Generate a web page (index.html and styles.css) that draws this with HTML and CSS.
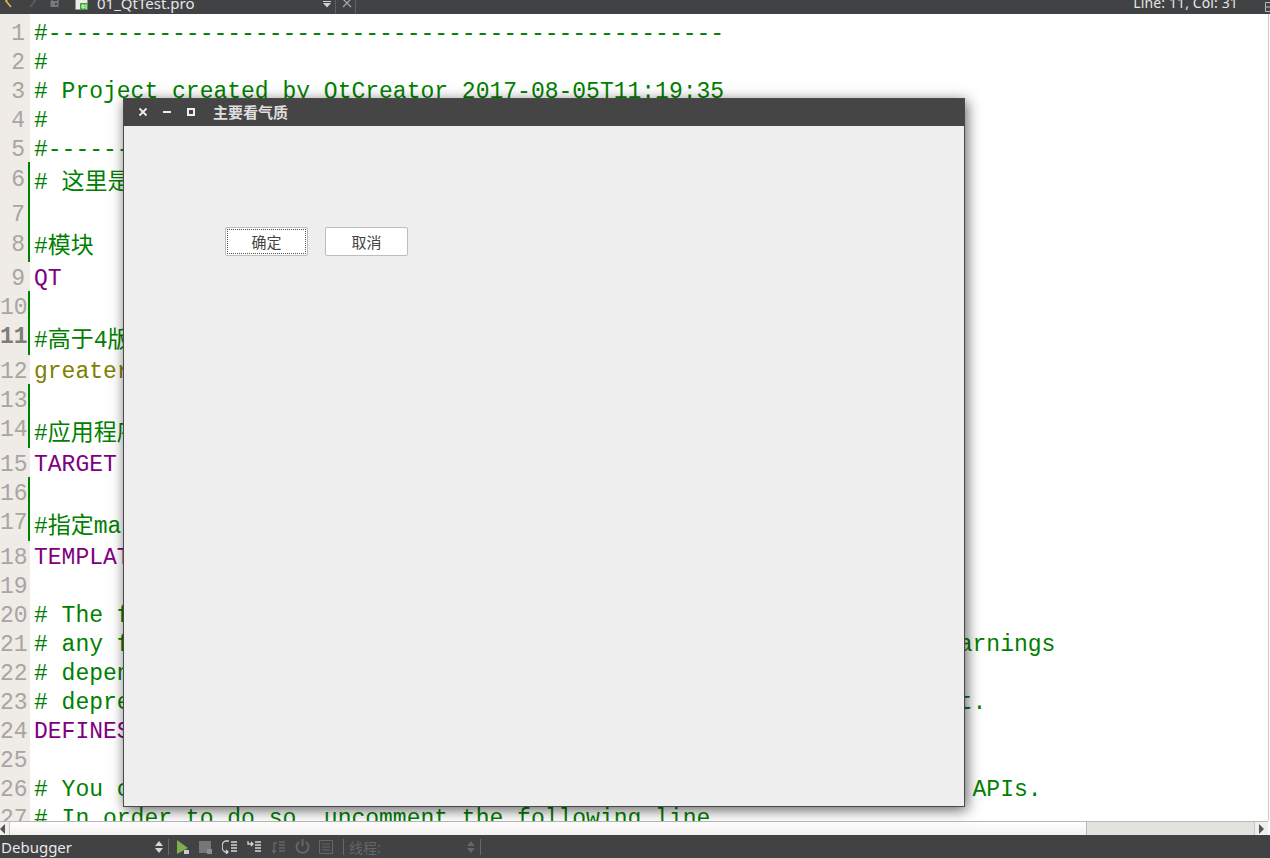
FILE: index.html
```html
<!DOCTYPE html>
<html lang="zh">
<head>
<meta charset="utf-8">
<title>01_QtTest.pro</title>
<link rel="stylesheet" href="styles.css">
</head>
<body>
<div class="app">
  <header class="topbar">
    <div class="top-inner">
      <div class="top-left">
        <svg class="ico nav-back" width="10" height="14" viewBox="0 0 10 14"><path d="M7 -1 2 5 7 11" fill="none" stroke="#e6b93c" stroke-width="1.600"/></svg>
        <svg class="ico nav-fwd" width="10" height="14" viewBox="0 0 10 14"><path d="M2 -1 7 5 2 11" fill="none" stroke="#5c5e60" stroke-width="1.600"/></svg>
        <svg class="ico lock" width="10" height="14" viewBox="0 0 10 14"><path d="M2 6V2.500a3 3 0 0 1 6 0V6" fill="none" stroke="#77797b" stroke-width="1.500"/><rect x="0.500" y="5" width="8" height="6" fill="#77797b"/><rect x="5" y="7" width="2" height="2" fill="#404244"/></svg>
        <svg class="ico file" width="14" height="14" viewBox="0 0 14 14"><path d="M0.500 3.500h12v10h-12z" fill="#e8ebe6" stroke="#8d9490"/><rect x="5" y="7" width="8" height="7" rx="1" fill="#3aa52f"/><path d="M7 9h2v3H7zM11 8v5" fill="none" stroke="#fff"/></svg>
        <span class="tab-name">01_QtTest.pro</span>
      </div>
      <div class="tab-tools">
        <svg width="10" height="14" viewBox="0 0 10 14"><path d="M1 5.500h8" stroke="#d0d0d0"/><path d="M1 7h8L5 11.500z" fill="#d0d0d0"/></svg>
        <span class="sep"></span>
        <svg width="10" height="14" viewBox="0 0 10 14"><path d="M1 3 9 11M9 3 1 11" stroke="#a8aaac" stroke-width="1.200"/></svg>
        <span class="sep"></span>
      </div>
      <span class="spacer"></span>
      <span class="pos">Line: 11, Col: 31</span>
      <svg class="split" width="8" height="14" viewBox="0 0 8 14"><path d="M3.500 1.500h10v9h-10zM3.500 6h10" fill="none" stroke="#bbb"/></svg>
    </div>
  </header>

  <main class="editor">
    <div class="viewport">
      <div class="row"><span class="num">1</span><span class="code c-green">#-------------------------------------------------</span></div>
      <div class="row"><span class="num">2</span><span class="code c-green">#</span></div>
      <div class="row"><span class="num">3</span><span class="code c-green"># Project created by QtCreator 2017-08-05T11:19:35</span></div>
      <div class="row"><span class="num">4</span><span class="code c-green">#</span></div>
      <div class="row"><span class="num">5</span><span class="code c-green">#-------------------------------------------------</span></div>
      <div class="row tall mark l6"><span class="num">6</span><span class="code c-green"># 这里是工程配置文件</span></div>
      <div class="row tall mark l7"><span class="num">7</span><span class="code"></span></div>
      <div class="row tall mark l8"><span class="num">8</span><span class="code c-green">#模块</span></div>
      <div class="row"><span class="num">9</span><span class="code c-purple flush">QT       += core gui</span></div>
      <div class="row mid mark blank"><span class="num">10</span><span class="code"></span></div>
      <div class="row mid mark cjk cur"><span class="num">11</span><span class="code c-green">#高于4版本添加 QT += widgets</span></div>
      <div class="row"><span class="num">12</span><span class="code c-olive flush">greaterThan(QT_MAJOR_VERSION, 4): QT += widgets</span></div>
      <div class="row mid mark blank"><span class="num">13</span><span class="code"></span></div>
      <div class="row mid mark cjk"><span class="num">14</span><span class="code c-green">#应用程序名字</span></div>
      <div class="row"><span class="num">15</span><span class="code c-purple flush">TARGET = 01_QtTest</span></div>
      <div class="row mid mark blank"><span class="num">16</span><span class="code"></span></div>
      <div class="row mid mark cjk"><span class="num">17</span><span class="code c-green">#指定makefile的类型</span></div>
      <div class="row"><span class="num">18</span><span class="code c-purple flush">TEMPLATE = app</span></div>
      <div class="row"><span class="num">19</span><span class="code"></span></div>
      <div class="row"><span class="num">20</span><span class="code c-green"># The following define makes your compiler emit warnings if you use</span></div>
      <div class="row"><span class="num">21</span><span class="code c-green"># any feature of Qt which as been marked as deprecated (the exact warnings</span></div>
      <div class="row"><span class="num">22</span><span class="code c-green"># depend on your compiler). Please consult the documentation of the</span></div>
      <div class="row"><span class="num">23</span><span class="code c-green"># deprecated API in order to know how to port your code away from it.</span></div>
      <div class="row"><span class="num">24</span><span class="code c-purple flush">DEFINES += QT_DEPRECATED_WARNINGS</span></div>
      <div class="row"><span class="num">25</span><span class="code"></span></div>
      <div class="row"><span class="num">26</span><span class="code c-green"># You can also make your code fail to compile if you use deprecated APIs.</span></div>
      <div class="row"><span class="num">27</span><span class="code c-green"># In order to do so, uncomment the following line.</span></div>
    </div>
    <div class="hscroll">
      <span class="arrow-btn left"><svg width="5" height="10" viewBox="0 0 5 10"><path d="M5 0v10L0 5z" fill="#555"/></svg></span>
      <span class="slider"></span>
      <span class="track"></span>
      <span class="arrow-btn right"><svg width="5" height="10" viewBox="0 0 5 10"><path d="M0 0v10l5-5z" fill="#555"/></svg></span>
    </div>
  </main>

  <footer class="bottombar">
    <span class="kit">Debugger</span>
    <svg class="updown" width="8" height="12" viewBox="0 0 8 12"><path d="M4 0 8 5H0zM4 12 0 7h8z" fill="#d8d8d8"/></svg>
    <span class="vsep"></span>
    <div class="dbg-icons">
      <svg width="14" height="16" viewBox="0 0 14 16"><path d="M1 1 12 9 1 15z" fill="#7fae4e"/><path d="M8 11h5v4H8z" fill="#c9cbc9"/></svg>
      <svg width="14" height="16" viewBox="0 0 14 16"><rect x="0" y="2" width="12" height="12" fill="#747678"/><path d="M8 10h5v5H8z" fill="#8c8e90"/></svg>
      <svg width="16" height="14" viewBox="0 0 16 14"><path d="M7 1H4a3.500 5 0 0 0 0 11h2M4 10l2 2-2 2" fill="none" stroke="#d4d4d4" stroke-width="1.300"/><path d="M9 2h6M9 5h6M9 8h6M9 11h6" stroke="#d4d4d4" stroke-width="1.300"/></svg>
      <svg width="15" height="14" viewBox="0 0 15 14"><path d="M1 1v3h5M4 2l2 2-2 2" fill="none" stroke="#d4d4d4" stroke-width="1.300"/><path d="M8 2h6M8 5h6M8 8h6M8 11h6" stroke="#d4d4d4" stroke-width="1.300"/></svg>
      <svg width="15" height="14" viewBox="0 0 15 14"><path d="M6 3H3v9M1 10l2 3 2-3" fill="none" stroke="#646668" stroke-width="1.300"/><path d="M8 2h6M8 5h6M8 8h6M8 11h6" stroke="#646668" stroke-width="1.300"/></svg>
      <svg width="15" height="15" viewBox="0 0 15 15"><path d="M4 3a6 6 0 1 0 7 0" fill="none" stroke="#646668" stroke-width="2"/><path d="M7.500 0v7" stroke="#646668" stroke-width="2"/></svg>
      <svg width="14" height="14" viewBox="0 0 14 14"><path d="M.5.5h13v13H.5zM3 4h8M3 7h8M3 10h8" fill="none" stroke="#646668"/></svg>
    </div>
    <span class="vsep second"></span>
    <span class="thread">线程:</span>
    <svg class="updown dim" width="8" height="12" viewBox="0 0 8 12"><path d="M4 0 8 5H0zM4 12 0 7h8z" fill="#646668"/></svg>
    <span class="vsep third"></span>
  </footer>

  <section class="window">
    <div class="win-title">
      <svg width="10" height="10" viewBox="0 0 10 10"><path d="M1.500 1.500 8.500 8.500M8.500 1.500 1.500 8.500" stroke="#eee" stroke-width="1.800"/></svg>
      <svg width="10" height="10" viewBox="0 0 10 10"><path d="M1 5h8" stroke="#eee" stroke-width="2"/></svg>
      <svg width="10" height="10" viewBox="0 0 10 10"><path d="M2 2h6v6H2z" fill="none" stroke="#eee" stroke-width="2"/></svg>
      <span class="win-name">主要看气质</span>
    </div>
    <div class="win-body">
      <button class="btn focus" type="button">确定</button>
      <button class="btn" type="button">取消</button>
    </div>
  </section>
</div>
</body>
</html>
```
FILE: styles.css
```css
* { box-sizing: border-box; }
html, body { margin: 0; padding: 0; height: 100%; overflow: hidden; }
body { font-family: "Noto Sans", "Noto Sans CJK SC", sans-serif; background: #fff; }
.app { position: relative; width: 1270px; height: 858px; display: flex; flex-direction: column; overflow: hidden; }

.topbar { height: 14px; flex: none; background: #404244; overflow: hidden; }
.top-inner { display: flex; align-items: center; height: 26px; margin-top: -10px; color: #e6e6e6; font-size: 14px; }
.top-left { display: flex; align-items: center; width: 322px; padding-left: 4px; }
.ico { flex: none; }
.nav-fwd { margin-left: 14px; }
.lock { margin-left: 12px; }
.file { margin-left: 15px; }
.tab-name { margin-left: 8px; line-height: 26px; font-size: 15px; }
.tab-tools { display: flex; align-items: center; gap: 3px; }
.tab-tools .sep { width: 1px; height: 26px; background: #5e6062; margin: 0 3px 0 0; }
.spacer { flex: 1; }
.pos { margin-right: 24px; line-height: 26px; letter-spacing: .12px; }
.split { flex: none; margin-top: 10px; }

.editor { flex: 1; min-height: 0; display: flex; flex-direction: column; background: #fff; }
.viewport { flex: 1; min-height: 0; overflow: hidden; padding-top: 3px; border-right: 1px solid #c8c8c8; margin-right: 1px; background: linear-gradient(to right, #efebe7 30px, #fff 30px); }
.row { display: flex; height: 29px; line-height: 35px; font-family: "Liberation Mono", "Noto Sans CJK SC", monospace; font-size: 23px; }
.row.mid { height: 32px; }
.row.tall { height: 33.34px; }
.mid.blank .num { line-height: 34px; }
.mid.cjk .num { line-height: 28px; }
.l6 .num { line-height: 37px; }
.l7 .num { line-height: 40px; }
.l8 .num { line-height: 32px; }
.num { flex: none; width: 30px; padding-right: 5px; text-align: right; color: #a9a5a1; white-space: nowrap; }
.mark .num { border-right: 2px solid #008000; padding-right: 3px; }
.cur .num { color: #7f7c79; font-weight: 700; }
.code { flex: 1; padding-left: 4px; white-space: pre; }
.mark .code { line-height: 37px; }
.l6 .code { line-height: 43px; }
.code.flush { padding-left: 4px; }
.c-green { color: #008000; }
.c-purple { color: #800080; }
.c-olive { color: #808000; }

.hscroll { flex: none; height: 14px; display: flex; background: #e3e2de; border-top: 1px solid #b9b9b9; margin-right: 2px; }
.arrow-btn { flex: none; display: flex; align-items: center; justify-content: center; width: 10px; background: #f1efeb; }
.arrow-btn.left { border-right: 1px solid #c8c8c8; justify-content: flex-start; }
.arrow-btn.right { width: 14px; border-left: 1px solid #c8c8c8; }
.slider { width: 1077px; background: linear-gradient(to bottom, #ffffff, #f3f1ee); border-right: 1px solid #b9b9b9; }
.track { flex: 1; }

.bottombar { flex: none; height: 23px; display: flex; align-items: center; background: #404244; color: #e8e8e8; font-size: 15px; }
.kit { width: 155px; padding-left: 1px; }
.updown { flex: none; }
.vsep { flex: none; width: 1px; height: 16px; background: #66686a; margin-left: 5px; }
.dbg-icons { display: flex; align-items: center; gap: 9px; margin-left: 7px; width: 167px; }
.vsep.second { margin-left: 0; }
.thread { width: 123px; padding-left: 5px; color: #646668; font-size: 14px; }
.updown.dim { margin-left: 0; }
.vsep.third { margin-left: 5px; }

.window { position: absolute; left: 123px; top: 98px; width: 842px; height: 709px; display: flex; flex-direction: column; border: 1px solid #4a4a4a; background: #eee; box-shadow: 2px 3px 13px rgba(0,0,0,.62); }
.win-title { flex: none; height: 27px; display: flex; align-items: center; gap: 14px; padding: 0 0 2px 14px; background: #454545; }
.win-title svg { flex: none; }
.win-name { margin-left: 3px; color: #dfdfdf; font-size: 15px; font-weight: 700; font-family: "Noto Sans CJK SC", sans-serif; }
.win-body { flex: 1; display: flex; align-items: flex-start; gap: 17px; padding: 101px 0 0 101px; }
.btn { width: 83px; height: 29px; padding: 0; background: #fff; border: 1px solid #bdbdbd; border-radius: 2px; color: #444; font-family: "Noto Sans CJK SC", sans-serif; font-size: 15px; }
.btn.focus { outline: 1px dotted #555; outline-offset: -3px; }
```
